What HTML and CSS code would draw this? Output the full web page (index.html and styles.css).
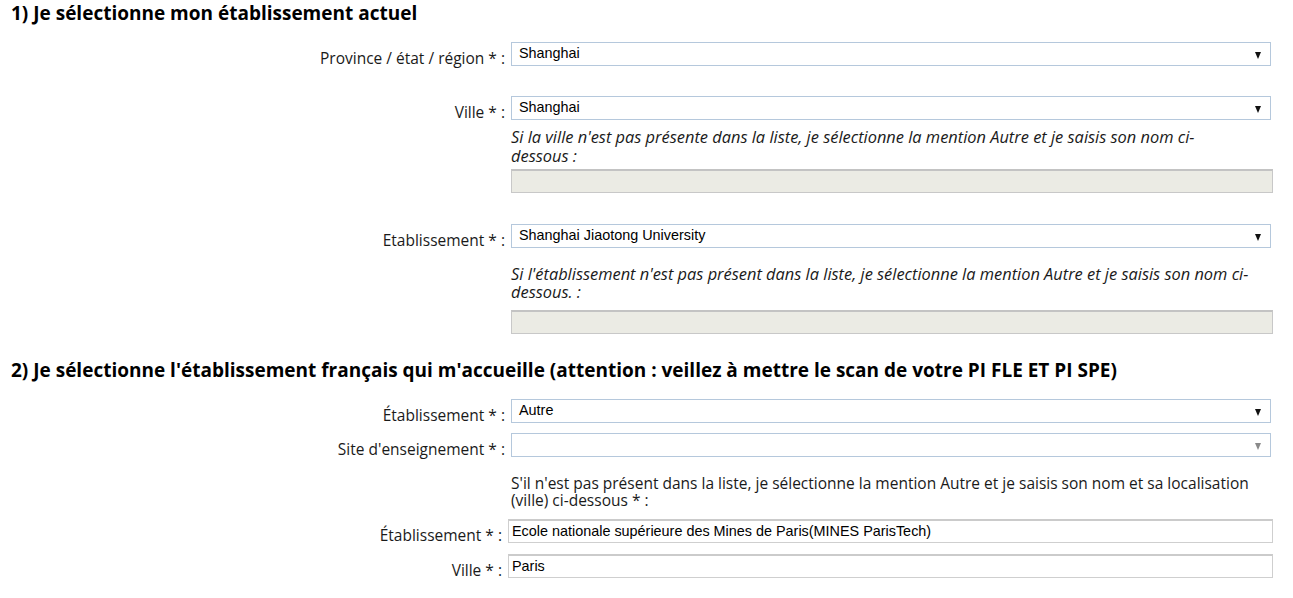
FILE: index.html
```html
<!DOCTYPE html>
<html lang="fr">
<head>
<meta charset="utf-8">
<title>Etablissement</title>
<link rel="stylesheet" href="styles.css">
</head>
<body>
<section class="step">
  <h2 class="step-title">1) Je sélectionne mon établissement actuel</h2>

  <div class="field field-first">
    <div class="field-label">Province / état / région * :</div>
    <div class="field-control">
      <div class="select"><span class="select-value">Shanghai</span><span class="select-arrow"></span></div>
    </div>
  </div>

  <div class="field field-spaced">
    <div class="field-label">Ville * :</div>
    <div class="field-control">
      <div class="select"><span class="select-value">Shanghai</span><span class="select-arrow"></span></div>
      <p class="help help-italic">Si la ville n'est pas présente dans la liste, je sélectionne la mention Autre et je saisis son nom ci-<br>dessous :</p>
      <div class="input input-disabled"></div>
    </div>
  </div>

  <div class="field field-spaced field-spaced-b">
    <div class="field-label">Etablissement * :</div>
    <div class="field-control">
      <div class="select"><span class="select-value">Shanghai Jiaotong University</span><span class="select-arrow"></span></div>
      <p class="help help-italic help-b">Si l'établissement n'est pas présent dans la liste, je sélectionne la mention Autre et je saisis son nom ci-<br>dessous. :</p>
      <div class="input input-disabled input-disabled-b"></div>
    </div>
  </div>
</section>

<section class="step step-2">
  <h2 class="step-title">2) Je sélectionne l'établissement français qui m'accueille (attention : veillez à mettre le scan de votre PI FLE ET PI SPE)</h2>

  <div class="field field-s2">
    <div class="field-label">Établissement * :</div>
    <div class="field-control">
      <div class="select"><span class="select-value">Autre</span><span class="select-arrow"></span></div>
    </div>
  </div>

  <div class="field field-tight">
    <div class="field-label">Site d'enseignement * :</div>
    <div class="field-control">
      <div class="select select-empty"><span class="select-value"></span><span class="select-arrow select-arrow-muted"></span></div>
      <p class="help help-plain">S'il n'est pas présent dans la liste, je sélectionne la mention Autre et je saisis son nom et sa localisation<br>(ville) ci-dessous * :</p>
    </div>
  </div>

  <div class="field field-text">
    <div class="field-label">Établissement * :</div>
    <div class="field-control">
      <div class="input input-text">Ecole nationale supérieure des Mines de Paris(MINES ParisTech)</div>
    </div>
  </div>

  <div class="field field-text field-text-2">
    <div class="field-label">Ville * :</div>
    <div class="field-control">
      <div class="input input-text">Paris</div>
    </div>
  </div>
</section>
</body>
</html>
```

FILE: styles.css
```css
* { box-sizing: border-box; }

html, body {
  margin: 0;
  padding: 0;
  background: #ffffff;
}

body {
  width: 1293px;
  font-family: "Open Sans", "Noto Sans", sans-serif;
  color: #222222;
  font-size: 15.5px;
}

.step-title {
  margin: 0;
  padding-left: 11px;
  font-size: 19px;
  font-weight: 700;
  color: #000000;
  line-height: 24px;
}

.step {
  padding-top: 1px;
}

.step-2 {
  padding-top: 24px;
}

.field {
  display: grid;
  grid-template-columns: 505px 760px;
  column-gap: 6px;
  align-items: start;
}

.field-first { margin-top: 17px; }
.field-spaced { margin-top: 30px; }
.field-spaced-b { margin-top: 31px; }
.field-s2 { margin-top: 17px; }
.field-tight { margin-top: 10px; }
.field-text { margin-top: 10px; grid-template-columns: 502px 765px; }
.field-text-2 { margin-top: 11px; }

.field-label {
  text-align: right;
  line-height: 24px;
  margin-top: 4px;
  margin-bottom: -4px;
  white-space: nowrap;
  color: #1a1a1a;
}

.select {
  position: relative;
  height: 24px;
  border: 1px solid #b5c8dc;
  background: #ffffff;
  font-family: "Liberation Sans", Arial, sans-serif;
  font-size: 14.4px;
  color: #000000;
  line-height: 20px;
  padding-left: 7px;
}

.select-value {
  display: block;
}

.select-arrow {
  position: absolute;
  right: 9px;
  top: 9px;
  width: 0;
  height: 0;
  border-left: 3.5px solid transparent;
  border-right: 3.5px solid transparent;
  border-top: 7px solid #111111;
}

.select-arrow-muted {
  border-top-color: #8a8a8a;
}

.help {
  margin: 0;
  color: #1a1a1a;
}

.help-italic {
  font-style: italic;
  font-size: 16.4px;
  line-height: 19px;
  margin-top: 7px;
}

.help-b {
  margin-top: 17px;
  line-height: 18px;
}

.help-plain {
  line-height: 17px;
  margin-top: 18px;
}

.input {
  height: 24px;
}

.input-disabled {
  margin-top: 4px;
  width: 762px;
  background: #ebebe4;
  border: 1px solid #c8c8c8;
  border-top: 2px solid #c3c3c3;
}

.input-disabled-b {
  margin-top: 9px;
}

.input-text {
  border: 1px solid #cfcfcf;
  border-top: 2px solid #cbcbcb;
  background: #ffffff;
  font-family: "Liberation Sans", Arial, sans-serif;
  font-size: 14.4px;
  color: #000000;
  line-height: 20px;
  padding-left: 3px;
  white-space: nowrap;
}
```
